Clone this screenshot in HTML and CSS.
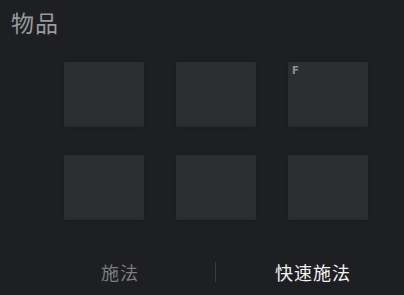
FILE: index.html
```html
<!DOCTYPE html>
<html lang="zh">
<head>
    <meta charset="UTF-8">
    <meta name="viewport" content="width=device-width, initial-scale=1.0">
    <title>物品</title>
    <link rel="stylesheet" href="styles.css">
</head>
<body>
    <div class="panel">
        <h1 class="title">物品</h1>

        <!-- Item slots -->
        <div class="slots">
            <div class="slot"></div>
            <div class="slot"></div>
            <div class="slot"><span class="hotkey">F</span></div>
            <div class="slot"></div>
            <div class="slot"></div>
            <div class="slot"></div>
        </div>

        <!-- Cast mode tabs -->
        <div class="tabs">
            <div class="tab">施法</div>
            <div class="tab-divider"></div>
            <div class="tab tab-active">快速施法</div>
        </div>
    </div>
</body>
</html>
```

FILE: styles.css
```css
body {
    margin: 0;
    background: #1e1f22;
    font-family: 'Noto Sans CJK SC', 'Noto Sans', sans-serif;
}

.panel {
    width: 404px;
    height: 295px;
    box-sizing: border-box;
    padding-top: 6px;
}

.title {
    margin: 0 0 0 11px;
    font-size: 23px;
    font-weight: normal;
    line-height: 32px;
    letter-spacing: 1px;
    color: #9a9b9d;
}

.slots {
    display: grid;
    grid-template-columns: repeat(3, 80px);
    grid-auto-rows: 65px;
    column-gap: 32px;
    row-gap: 28px;
    margin: 24px 0 0 64px;
}

.slot {
    position: relative;
    background: #2b2f30;
    box-shadow: inset 0 -2px 0 #282b2c, 0 0 6px rgba(0, 0, 0, 0.15);
}

.hotkey {
    position: absolute;
    top: 3px;
    left: 4px;
    font-family: 'DejaVu Sans', sans-serif;
    font-size: 10px;
    font-weight: bold;
    color: #8e9092;
}

.tabs {
    display: grid;
    grid-template-columns: 190px 1px 1fr;
    align-items: center;
    margin: 40px 0 0 25px;
}

.tab {
    text-align: center;
    font-size: 18px;
    line-height: 24px;
    letter-spacing: 1px;
    color: #7c7d80;
}

.tab-active {
    padding-left: 6px;
    color: #f2f2f2;
}

.tab-divider {
    height: 20px;
    background: #3a3b3e;
}
```
